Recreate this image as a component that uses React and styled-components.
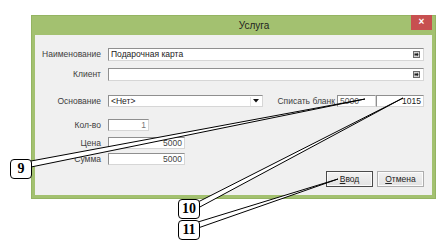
import styled, { createGlobalStyle } from "styled-components";

const GlobalStyle = createGlobalStyle`
  html, body {
    margin: 0;
    padding: 0;
    background: #ffffff;
  }
  body {
    font-family: "Liberation Sans", Arial, sans-serif;
  }
`;

const Page = styled.div`
  position: relative;
  width: 447px;
  height: 244px;
  padding: 15px 0 0 31px;
  box-sizing: border-box;
  overflow: hidden;
`;

const Window = styled.div`
  width: 405px;
  height: 184px;
  display: flex;
  flex-direction: column;
  background: #a3c170;
  box-shadow: inset 0 0 0 1px #94b462;
`;

const TitleBar = styled.div`
  height: 20px;
  display: flex;
  align-items: flex-start;
`;

const Title = styled.div`
  flex: 1;
  padding-left: 66px;
  text-align: center;
  line-height: 21px;
  font-size: 10px;
  color: #1e1e1e;
`;

const CloseButton = styled.div`
  width: 21px;
  height: 15px;
  margin-right: 4px;
  background: #c75050;
  color: #ffffff;
  font-size: 10px;
  font-weight: 700;
  line-height: 14px;
  text-align: center;
`;

const Client = styled.div`
  flex: 1;
  margin: 0 4px 4px;
  background: #f0f0f0;
  padding: 0 8px 0 0;
  display: flex;
  flex-direction: column;
`;

const Row = styled.div`
  display: flex;
  align-items: stretch;
  height: ${(p) => p.$h}px;
  margin-top: ${(p) => p.$top}px;
`;

const Label = styled.div`
  width: 66px;
  padding-right: 7px;
  text-align: right;
  font-size: 8.5px;
  color: #404040;
  line-height: ${(p) => p.$h}px;
  white-space: nowrap;
`;

const Field = styled.div`
  position: relative;
  box-sizing: border-box;
  width: ${(p) => (p.$w ? `${p.$w}px` : "auto")};
  flex: ${(p) => (p.$w ? "none" : 1)};
  background: #ffffff;
  border-top: 1px solid #8f8f8f;
  border-left: 1px solid #8f8f8f;
  border-right: 1px solid #d6d6d6;
  border-bottom: 1px solid #d6d6d6;
  padding: 0 2px;
  font-size: 8.5px;
  line-height: 11px;
  color: ${(p) => p.$color || "#222222"};
  white-space: nowrap;
  overflow: hidden;
  display: flex;
  align-items: center;
  justify-content: ${(p) => (p.$align === "right" ? "flex-end" : "flex-start")};
`;

const FieldText = styled.span`
  flex: ${(p) => (p.$grow ? 1 : "none")};
`;

const PickIcon = styled.svg`
  width: 7px;
  height: 7px;
  flex: none;
  margin-right: 1px;
`;

const ComboArrow = styled.div`
  width: 9px;
  height: 9px;
  flex: none;
  display: flex;
  align-items: center;
  justify-content: center;
  border-left: 1px solid #e4e4e4;
`;

const WriteOff = styled.div`
  margin-left: auto;
  display: flex;
  align-items: stretch;
`;

const InlineLabel = styled.div`
  font-size: 8.5px;
  color: #404040;
  line-height: 12px;
  padding-right: 2px;
  white-space: nowrap;
`;

const Buttons = styled.div`
  display: flex;
  justify-content: flex-end;
  gap: 4px;
  height: 16px;
  margin-top: 6px;
`;

const Button = styled.div`
  box-sizing: border-box;
  width: 47px;
  height: 16px;
  border: 1px solid ${(p) => (p.$default ? "#4a4a4a" : "#adadad")};
  background: linear-gradient(#f2f2f2, #e2e2e2);
  box-shadow: inset 0 0 0 1px #fbfbfb;
  font-size: 8.5px;
  color: #222222;
  line-height: 14px;
  text-align: center;
`;

const Key = styled.span`
  text-decoration: underline;
`;

const Overlay = styled.svg`
  position: absolute;
  left: 0;
  top: 0;
  width: 447px;
  height: 244px;
  pointer-events: none;
`;

const Callout = styled.div`
  position: absolute;
  left: ${(p) => p.$x}px;
  top: ${(p) => p.$y}px;
  box-sizing: border-box;
  width: 22px;
  height: 20px;
  border: 1.5px solid #000000;
  border-radius: 4px;
  background: #ffffff;
  font-family: "Liberation Serif", "Times New Roman", serif;
  font-weight: 700;
  font-size: 14px;
  line-height: 17px;
  text-align: center;
  color: #000000;
`;

const Pick = () => (
  <PickIcon viewBox="0 0 7 7">
    <rect x="0.5" y="0.5" width="6" height="6" fill="#d4d4d4" stroke="#6a6a6a" />
    <path d="M1.5 2.5 H4 V1.5 L5.5 3.5 L4 5.5 V4.5 H1.5 Z" fill="#202020" />
  </PickIcon>
);

const pointers = [
  "31,161 365,99 31,167",
  "198,202 403,98 198,208",
  "198,222 338,179 198,228",
];

export default function App() {
  return (
    <>
      <GlobalStyle />
      <Page>
        <Window>
          <TitleBar>
            <Title>Услуга</Title>
            <CloseButton>×</CloseButton>
          </TitleBar>
          <Client>
            <Row $top={13} $h={13}>
              <Label $h={13}>Наименование</Label>
              <Field>
                <FieldText $grow>Подарочная карта</FieldText>
                <Pick />
              </Field>
            </Row>
            <Row $top={7} $h={13}>
              <Label $h={13}>Клиент</Label>
              <Field>
                <FieldText $grow />
                <Pick />
              </Field>
            </Row>
            <Row $top={14} $h={12}>
              <Label $h={12}>Основание</Label>
              <Field $w={155}>
                <FieldText $grow>&lt;Нет&gt;</FieldText>
                <ComboArrow>
                  <svg width="6" height="4" viewBox="0 0 6 4">
                    <path d="M0 0 H6 L3 3.5 Z" fill="#111111" />
                  </svg>
                </ComboArrow>
              </Field>
              <WriteOff>
                <InlineLabel>Списать бланк</InlineLabel>
                <Field $w={39} $color="#555555">5000</Field>
                <Field $w={48} $align="right">1015</Field>
              </WriteOff>
            </Row>
            <Row $top={12} $h={12}>
              <Label $h={12}>Кол-во</Label>
              <Field $w={41} $align="right" $color="#777777">1</Field>
            </Row>
            <Row $top={6} $h={12}>
              <Label $h={12}>Цена</Label>
              <Field $w={77} $align="right" $color="#444444">5000</Field>
            </Row>
            <Row $top={4} $h={12}>
              <Label $h={12}>Сумма</Label>
              <Field $w={77} $align="right" $color="#444444">5000</Field>
            </Row>
            <Buttons>
              <Button $default>
                <Key>В</Key>вод
              </Button>
              <Button>
                <Key>О</Key>тмена
              </Button>
            </Buttons>
          </Client>
        </Window>
        <Overlay viewBox="0 0 447 244">
          {pointers.map((pts) => (
            <polygon
              key={pts}
              points={pts}
              fill="#ffffff"
              stroke="#000000"
              strokeWidth="1"
              strokeLinejoin="round"
            />
          ))}
        </Overlay>
        <Callout $x={10} $y={159}>9</Callout>
        <Callout $x={178} $y={199}>10</Callout>
        <Callout $x={178} $y={220}>11</Callout>
      </Page>
    </>
  );
}
